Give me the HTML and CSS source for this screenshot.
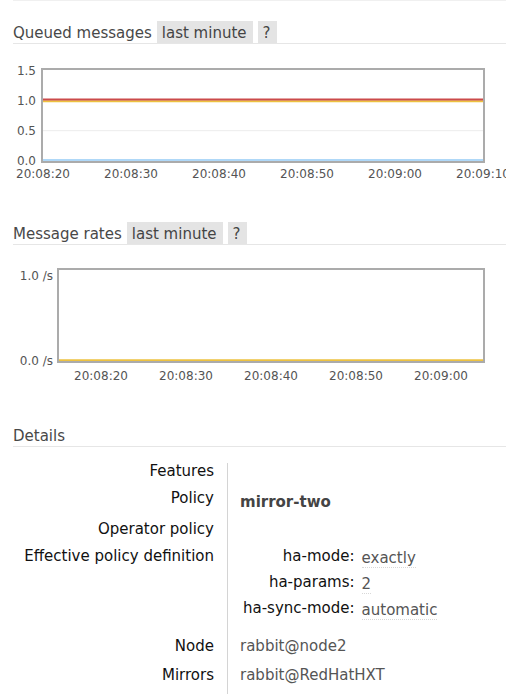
FILE: index.html
```html
<!DOCTYPE html>
<html>
<head>
  <meta charset="UTF-8">
  <title>Queue details</title>
  <link rel="stylesheet" href="styles.css">
</head>
<body>
  <div class="page">
    <div class="section">
      <h2>Queued messages <span class="pill">last minute</span><span class="pill">?</span></h2>
      <svg class="chart" width="493" height="178" viewBox="0 0 493 178">
        <line class="grid" x1="30" y1="86.7" x2="470" y2="86.7"/>
        <line x1="30" y1="57.3" x2="470" y2="57.3" stroke="#edc240" stroke-width="2"/>
        <line x1="30" y1="55.6" x2="470" y2="55.6" stroke="#cb4b4b" stroke-width="2"/>
        <line x1="30" y1="116" x2="470" y2="116" stroke="#afd8f8" stroke-width="2"/>
        <rect class="frame" x="29" y="25" width="442" height="93"/>
        <g class="ylab">
          <text x="23" y="30.5">1.5</text>
          <text x="23" y="60.5">1.0</text>
          <text x="23" y="90.5">0.5</text>
          <text x="23" y="120.5">0.0</text>
        </g>
        <g class="xlab">
          <text x="30" y="133.5">20:08:20</text>
          <text x="118" y="133.5">20:08:30</text>
          <text x="206" y="133.5">20:08:40</text>
          <text x="294" y="133.5">20:08:50</text>
          <text x="382" y="133.5">20:09:00</text>
          <text x="470" y="133.5">20:09:10</text>
        </g>
      </svg>
    </div>

    <div class="section">
      <h2>Message rates <span class="pill">last minute</span><span class="pill">?</span></h2>
      <svg class="chart" width="493" height="179" viewBox="0 0 493 179">
        <line x1="46" y1="115.5" x2="470" y2="115.5" stroke="#edc240" stroke-width="2.5"/>
        <rect class="frame" x="45" y="24" width="426" height="93"/>
        <g class="ylab">
          <text x="40" y="34.5">1.0 /s</text>
          <text x="40" y="119.5">0.0 /s</text>
        </g>
        <g class="xlab">
          <text x="88" y="135">20:08:20</text>
          <text x="173" y="135">20:08:30</text>
          <text x="258" y="135">20:08:40</text>
          <text x="343" y="135">20:08:50</text>
          <text x="428" y="135">20:09:00</text>
        </g>
      </svg>
    </div>

    <div class="section">
      <h2>Details</h2>
      <table class="facts">
        <tr>
          <th>Features</th>
          <td></td>
        </tr>
        <tr>
          <th>Policy</th>
          <td class="policy">mirror-two</td>
        </tr>
        <tr>
          <th>Operator policy</th>
          <td></td>
        </tr>
        <tr>
          <th>Effective policy definition</th>
          <td>
            <table class="args">
              <tr><th>ha-mode:</th><td><span class="val">exactly</span></td></tr>
              <tr><th>ha-params:</th><td><span class="val">2</span></td></tr>
              <tr><th>ha-sync-mode:</th><td><span class="val">automatic</span></td></tr>
            </table>
          </td>
        </tr>
        <tr class="spaced">
          <th>Node</th>
          <td>rabbit@node2</td>
        </tr>
        <tr>
          <th>Mirrors</th>
          <td>rabbit@RedHatHXT</td>
        </tr>
      </table>
    </div>
  </div>
</body>
</html>
```

FILE: styles.css
```css
body {
  margin: 0;
  font-family: "DejaVu Sans", Verdana, sans-serif;
  font-size: 15px;
  color: #111;
  background: #fff;
}
.page {
  border-top: 1px solid #f0f0f0;
  margin-left: 13px;
}
.section h2 {
  display: flex;
  align-items: flex-end;
  gap: 5px;
  height: 22px;
  margin: 0;
  font-size: 15px;
  font-weight: normal;
  color: #484848;
  line-height: 20px;
  border-bottom: 1px solid #e6e6e6;
}
.section:first-child h2 {
  margin-top: 20px;
}
.pill {
  background: #e4e4e4;
  color: #444;
  padding: 2px 6px 0 5px;
  line-height: 20px;
}
.chart {
  display: block;
  overflow: hidden;
}
.frame {
  fill: none;
  stroke: #ababab;
  stroke-width: 2;
}
.grid {
  stroke: #ececec;
  stroke-width: 1;
}
.ylab text, .xlab text {
  font-family: "DejaVu Sans", Verdana, sans-serif;
  font-size: 12px;
  fill: #545454;
}
.ylab text {
  text-anchor: end;
}
.xlab text {
  text-anchor: middle;
}
.facts {
  border-collapse: collapse;
  margin-top: 16px;
}
.facts th, .facts td {
  vertical-align: top;
  line-height: 16px;
  padding: 0 0 11px;
}
.facts > tbody > tr > th {
  font-weight: normal;
  text-align: right;
  width: 201px;
  padding-right: 13px;
  white-space: nowrap;
}
.facts > tbody > tr > td {
  border-left: 1px solid #d4d4d4;
  padding-left: 12px;
  color: #555;
}
.facts .policy {
  font-weight: bold;
  color: #444;
  padding-top: 4px;
}
.facts tr.spaced > th, .facts tr.spaced > td {
  padding-top: 9px;
  padding-bottom: 13px;
}
.args {
  border-collapse: collapse;
}
.args th {
  font-weight: normal;
  text-align: right;
  color: #111;
  padding: 0 7px 10px 3px;
  line-height: 16px;
}
.args td {
  padding: 2px 0 8px;
  line-height: 16px;
  color: #555;
}
.args tr:last-child th, .args tr:last-child td {
  padding-bottom: 0;
}
.val {
  border-bottom: 1px dotted #d8d8d8;
}
```
